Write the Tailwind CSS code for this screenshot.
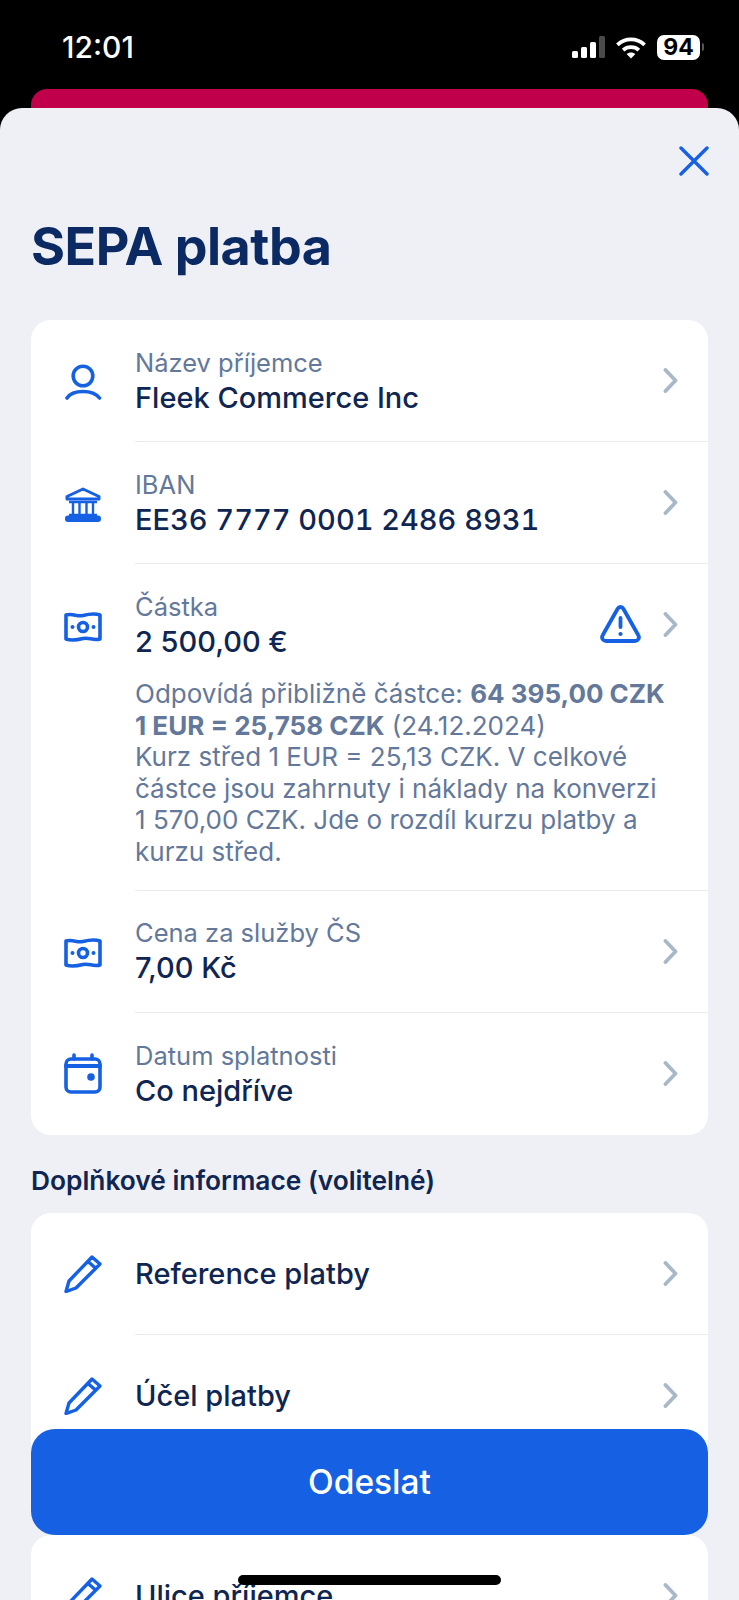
<!DOCTYPE html>
<html lang="cs">
<head>
<meta charset="utf-8">
<script src="https://cdn.jsdelivr.net/npm/@tailwindcss/browser@4"></script>
<title>SEPA platba</title>
</head>
<body class="m-0 bg-black">
<div class="relative w-[739px] h-[1600px] overflow-hidden bg-black font-['Inter','Liberation_Sans',sans-serif]">
  <!-- status bar -->
  <div class="flex items-center justify-between h-[89px] pl-[62px] pr-[35px] pt-[5px]">
    <span class="text-white text-[30px] font-medium leading-none">12:01</span>
    <div class="flex items-center gap-[10px]">
      <svg width="33" height="22" viewBox="0 0 33 22"><rect x="0" y="15" width="6" height="7" rx="1.5" fill="#fff"/><rect x="9" y="11" width="6" height="11" rx="1.5" fill="#fff"/><rect x="18" y="6" width="6" height="16" rx="1.5" fill="#fff"/><rect x="27" y="0" width="6" height="22" rx="1.5" fill="#4a4a4a"/></svg>
      <svg width="32" height="23" viewBox="0 0 30 22" fill="none" stroke="#fff" stroke-width="3.6"><path d="M2 8.5C9.5 1.5 20.500 1.500 28 8.500"/><path d="M7.500 13.500C11.500 9.800 18.500 9.800 22.500 13.500"/><path d="M15 21.500 10.800 17.300C13 15.300 17 15.300 19.200 17.300Z" fill="#fff" stroke="none"/></svg>
      <div class="flex items-center gap-[2px]">
        <div class="flex items-center justify-center w-[43px] h-[25px] rounded-[7px] bg-white text-black text-[23px] font-bold leading-none">94</div>
        <div class="w-[2px] h-[8px] rounded-r-sm bg-[#555]"></div>
      </div>
    </div>
  </div>
  <!-- red card behind the sheet -->
  <div class="mx-[31px] h-[40px] rounded-t-[16px] bg-[#c1004b]"></div>
  <!-- sheet -->
  <div class="relative mt-[-21px] h-[1492px] rounded-t-[22px] bg-[#eff0f5] overflow-hidden">
    <div class="flex justify-end pt-[38px] pr-[30px] h-[84px]">
      <svg width="30" height="30" viewBox="0 0 30 30" fill="none" stroke="#1560e3" stroke-width="3.400" stroke-linecap="round"><path d="M2 2 28 28M28 2 2 28"/></svg>
    </div>
    <h1 class="px-[31px] text-[#0b2a63] text-[52px] font-bold leading-[60px] tracking-[-0.5px] mt-[25px]">SEPA platba</h1>
    <!-- card 1 -->
    <div class="mx-[31px] mt-[43px] rounded-[20px] bg-white overflow-hidden">
      <!-- row 1 -->
      <div class="flex items-start">
        <div class="flex justify-center w-[104px] pt-[44px] shrink-0">
          <svg width="37" height="37" viewBox="0 0 37 37" fill="none" stroke="#1560e3" stroke-width="3.600" stroke-linecap="round"><circle cx="18" cy="12" r="9.800"/><path d="M2 34C5 29.500 11 27.500 18 27.500S31 29.500 34.500 34"/></svg>
        </div>
        <div class="flex-1 flex items-center justify-between h-[122px] pr-[30px] border-b border-[#e9ebf0]">
          <div class="pb-[2px]">
            <div class="text-[#63789a] text-[25.5px] leading-[35px]">Název příjemce</div>
            <div class="text-[#0f2552] text-[29px] font-medium leading-[35px]">Fleek Commerce Inc</div>
          </div>
          <svg width="15" height="25" viewBox="0 0 15 25" fill="none" stroke="#a9b8c9" stroke-width="3.800" stroke-linecap="round" stroke-linejoin="round"><path d="M2.500 2 12.500 12.500 2.500 23"/></svg>
        </div>
      </div>
      <!-- row 2 -->
      <div class="flex items-start">
        <div class="flex justify-center w-[104px] pt-[45px] shrink-0">
          <svg width="36" height="35" viewBox="0 0 36 35" fill="none" stroke="#1560e3" stroke-width="3" stroke-linejoin="round"><path d="M2 12V9.500L18 2 34 9.500V12Z"/><path d="M8 15V28M14.500 15V28M21.500 15V28M28 15V28" stroke-width="2.400"/><path d="M4 15H32M4 28H32" stroke-width="2.600"/><rect x="1.500" y="30" width="33" height="3.500" rx="1.500" fill="#1560e3"/></svg>
        </div>
        <div class="flex-1 flex items-center justify-between h-[122px] pr-[30px] border-b border-[#e9ebf0]">
          <div class="pb-[2px]">
            <div class="text-[#63789a] text-[25.5px] leading-[35px]">IBAN</div>
            <div class="text-[#0f2552] text-[29px] font-medium leading-[35px] tabular-nums">EE36 7777 0001 2486 8931</div>
          </div>
          <svg width="15" height="25" viewBox="0 0 15 25" fill="none" stroke="#a9b8c9" stroke-width="3.800" stroke-linecap="round" stroke-linejoin="round"><path d="M2.500 2 12.500 12.500 2.500 23"/></svg>
        </div>
      </div>
      <!-- row 3 -->
      <div class="flex items-start">
        <div class="flex justify-center w-[104px] pt-[48px] shrink-0">
          <svg width="38" height="30" viewBox="0 0 38 30" fill="none" stroke="#1560e3" stroke-width="3.600" stroke-linejoin="round"><path d="M2 3C9 1 13 5 19 3.500S30 1 36 3V27C29 29 25 25 19 26.500S8 29 2 27Z"/><circle cx="19" cy="15" r="4.500"/><circle cx="8.500" cy="15" r="2" fill="#1560e3" stroke="none"/><circle cx="29.500" cy="15" r="2" fill="#1560e3" stroke="none"/></svg>
        </div>
        <div class="flex-1 pt-[25px] pb-[22px] pr-[30px] border-b border-[#e9ebf0]">
          <div class="flex items-center justify-between">
            <div>
              <div class="text-[#63789a] text-[25.5px] leading-[35px]">Částka</div>
              <div class="text-[#0f2552] text-[29px] font-medium leading-[35px]">2 500,00 €</div>
            </div>
            <div class="flex items-center gap-[22px]">
              <svg width="41" height="38" viewBox="0 0 41 38" fill="none" stroke="#1560e3" stroke-width="3.800" stroke-linejoin="round" stroke-linecap="round"><path d="M17.500 4 2.800 30C1 33 3 36 6 36H35C38 36 40 33 38.200 30L23.500 4C22 1.300 19 1.300 17.500 4Z"/><path d="M20.500 13V22"/><circle cx="20.500" cy="29" r="2.100" fill="#1560e3" stroke="none"/></svg>
              <svg width="15" height="25" viewBox="0 0 15 25" fill="none" stroke="#a9b8c9" stroke-width="3.800" stroke-linecap="round" stroke-linejoin="round"><path d="M2.500 2 12.500 12.500 2.500 23"/></svg>
            </div>
          </div>
          <p class="mt-[19px] text-[#63789a] text-[26px] leading-[31.6px] whitespace-nowrap">Odpovídá přibližně částce: <b class="font-bold">64 395,00 CZK</b><br><b class="font-bold">1 EUR = 25,758 CZK</b> (24.12.2024)<br>Kurz střed 1 EUR = 25,13 CZK. V celkové<br>částce jsou zahrnuty i náklady na konverzi<br>1 570,00 CZK. Jde o rozdíl kurzu platby a<br>kurzu střed.</p>
        </div>
      </div>
      <!-- row 4 -->
      <div class="flex items-start">
        <div class="flex justify-center w-[104px] pt-[47px] shrink-0">
          <svg width="38" height="30" viewBox="0 0 38 30" fill="none" stroke="#1560e3" stroke-width="3.600" stroke-linejoin="round"><path d="M2 3C9 1 13 5 19 3.500S30 1 36 3V27C29 29 25 25 19 26.500S8 29 2 27Z"/><circle cx="19" cy="15" r="4.500"/><circle cx="8.500" cy="15" r="2" fill="#1560e3" stroke="none"/><circle cx="29.500" cy="15" r="2" fill="#1560e3" stroke="none"/></svg>
        </div>
        <div class="flex-1 flex items-center justify-between h-[122px] pr-[30px] border-b border-[#e9ebf0]">
          <div class="pb-[2px]">
            <div class="text-[#63789a] text-[25.5px] leading-[35px]">Cena za služby ČS</div>
            <div class="text-[#0f2552] text-[29px] font-medium leading-[35px]">7,00 Kč</div>
          </div>
          <svg width="15" height="25" viewBox="0 0 15 25" fill="none" stroke="#a9b8c9" stroke-width="3.800" stroke-linecap="round" stroke-linejoin="round"><path d="M2.500 2 12.500 12.500 2.500 23"/></svg>
        </div>
      </div>
      <!-- row 5 -->
      <div class="flex items-start">
        <div class="flex justify-center w-[104px] pt-[40px] shrink-0">
          <svg width="38" height="41" viewBox="0 0 38 41" fill="none" stroke="#1560e3" stroke-width="3.600" stroke-linecap="round" stroke-linejoin="round"><rect x="2" y="6" width="34" height="33" rx="5"/><path d="M2 13H36" stroke-width="4"/><path d="M10 2V6M28 2V6"/><circle cx="27" cy="24" r="3.800" fill="#1560e3" stroke="none"/></svg>
        </div>
        <div class="flex-1 flex items-center justify-between h-[122px] pr-[30px]">
          <div class="pb-[2px]">
            <div class="text-[#63789a] text-[25.5px] leading-[35px]">Datum splatnosti</div>
            <div class="text-[#0f2552] text-[29px] font-medium leading-[35px]">Co nejdříve</div>
          </div>
          <svg width="15" height="25" viewBox="0 0 15 25" fill="none" stroke="#a9b8c9" stroke-width="3.800" stroke-linecap="round" stroke-linejoin="round"><path d="M2.500 2 12.500 12.500 2.500 23"/></svg>
        </div>
      </div>
    </div>
    <h2 class="px-[31px] mt-[29px] text-[#0f2552] text-[26.3px] font-semibold leading-[34px]">Doplňkové informace (volitelné)</h2>
    <!-- card 2 -->
    <div class="mx-[31px] mt-[15px] rounded-t-[20px] bg-white">
      <div class="flex items-start">
        <div class="flex justify-center w-[104px] pt-[42px] shrink-0">
          <svg width="38" height="38" viewBox="0 0 38 38" fill="none" stroke="#1560e3" stroke-width="3.400" stroke-linejoin="round"><path d="M28 2 36 9 12 33 2 36.500 5 26Z"/><path d="M24 6.500 32 13.500"/></svg>
        </div>
        <div class="flex-1 flex items-center justify-between h-[122px] pr-[30px] border-b border-[#e9ebf0]">
          <div class="text-[#0f2552] text-[29px] font-medium leading-[35px]">Reference platby</div>
          <svg width="15" height="25" viewBox="0 0 15 25" fill="none" stroke="#a9b8c9" stroke-width="3.800" stroke-linecap="round" stroke-linejoin="round"><path d="M2.500 2 12.500 12.500 2.500 23"/></svg>
        </div>
      </div>
      <div class="flex items-start h-[121px]">
        <div class="flex justify-center w-[104px] pt-[42px] shrink-0">
          <svg width="38" height="38" viewBox="0 0 38 38" fill="none" stroke="#1560e3" stroke-width="3.400" stroke-linejoin="round"><path d="M28 2 36 9 12 33 2 36.500 5 26Z"/><path d="M24 6.500 32 13.500"/></svg>
        </div>
        <div class="flex-1 flex items-center justify-between h-[122px] pr-[30px]">
          <div class="text-[#0f2552] text-[29px] font-medium leading-[35px]">Účel platby</div>
          <svg width="15" height="25" viewBox="0 0 15 25" fill="none" stroke="#a9b8c9" stroke-width="3.800" stroke-linecap="round" stroke-linejoin="round"><path d="M2.500 2 12.500 12.500 2.500 23"/></svg>
        </div>
      </div>
    </div>
    <!-- card 3 -->
    <div class="mx-[31px] mt-[79px] rounded-t-[20px] bg-white">
      <div class="flex items-start">
        <div class="flex justify-center w-[104px] pt-[42px] shrink-0">
          <svg width="38" height="38" viewBox="0 0 38 38" fill="none" stroke="#1560e3" stroke-width="3.400" stroke-linejoin="round"><path d="M28 2 36 9 12 33 2 36.500 5 26Z"/><path d="M24 6.500 32 13.500"/></svg>
        </div>
        <div class="flex-1 flex items-center justify-between h-[122px] pr-[30px]">
          <div class="text-[#0f2552] text-[29px] font-medium leading-[35px]">Ulice příjemce</div>
          <svg width="15" height="25" viewBox="0 0 15 25" fill="none" stroke="#a9b8c9" stroke-width="3.800" stroke-linecap="round" stroke-linejoin="round"><path d="M2.500 2 12.500 12.500 2.500 23"/></svg>
        </div>
      </div>
    </div>
  </div>
  <!-- floating button -->
  <div class="absolute left-[31px] right-[31px] top-[1429px] h-[106px] flex items-center justify-center rounded-[24px] bg-[#1560e3] text-white text-[33.5px] font-medium">Odeslat</div>
  <!-- home indicator -->
  <div class="absolute left-[238px] top-[1575px] w-[263px] h-[10px] rounded-full bg-black"></div>
</div>
</body>
</html>
